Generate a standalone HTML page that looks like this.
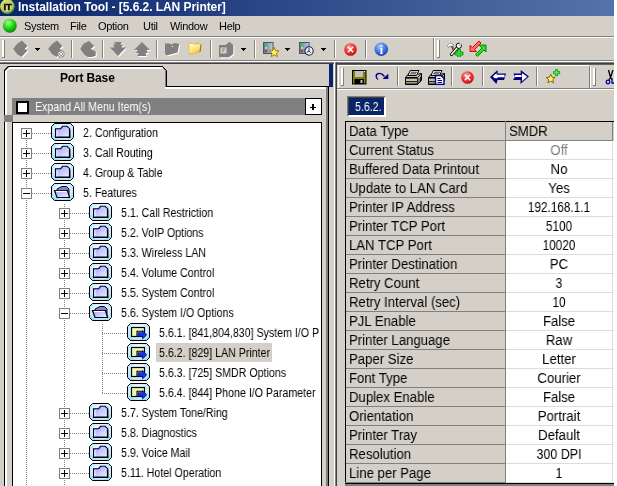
<!DOCTYPE html>
<html><head><meta charset="utf-8"><title>Installation Tool - [5.6.2. LAN Printer]</title>
<style>
html,body{margin:0;padding:0}
body{width:617px;height:486px;overflow:hidden;background:#D4D0C8;position:relative;font-family:"Liberation Sans",sans-serif;font-size:11px;color:#000}
body div,body svg{position:absolute}
.t,.c,.cv,.tr,.ms{will-change:transform}
.t{white-space:nowrap;line-height:13px;height:13px}
.tr,.ms{white-space:nowrap;line-height:14px;height:14px;font-size:12.5px;transform:scaleX(.85);transform-origin:0 0}
.c{white-space:nowrap;font-size:14px;transform:scaleX(.94);transform-origin:0 0;line-height:15px;height:15px}
.cv{white-space:nowrap;font-size:14px;transform:scaleX(.94);transform-origin:50% 0;line-height:15px;height:15px;text-align:center;width:106px}
.dv{background-image:repeating-linear-gradient(to bottom,#808080 0,#808080 1px,transparent 1px,transparent 2px)}
.dh{background-image:repeating-linear-gradient(to right,#808080 0,#808080 1px,transparent 1px,transparent 2px)}
</style></head><body>

<div style="left:0px;top:0px;width:614px;height:16px;background:linear-gradient(to right,#0A246A 0,#A6CAF0 1280px)"></div>
<svg style="left:0;top:0;will-change:transform" width="18" height="16" viewBox="0 0 18 16">
<defs><linearGradient id="gi" x1="0.1" y1="0" x2="0.9" y2="1"><stop offset="0" stop-color="#e8f060"/><stop offset="0.45" stop-color="#b8d040"/><stop offset="1" stop-color="#189028"/></linearGradient></defs>
<circle cx="7.400" cy="6.600" r="7.300" fill="url(#gi)"/>
<circle cx="7.400" cy="6.600" r="5.300" fill="#d4cc84"/>
<text x="3.400" y="9.800" font-family="Liberation Sans,sans-serif" font-weight="bold" font-size="9" textLength="8.200" lengthAdjust="spacingAndGlyphs" fill="#000" stroke="#000" stroke-width="0.400">IT</text>
</svg>
<div class="t" style="left:18px;top:0px;color:#fff;font-weight:bold;font-size:12px;line-height:14px;height:14px;letter-spacing:-0.05px">Installation Tool - [5.6.2. LAN Printer]</div>
<svg style="left:2px;top:18px" width="16" height="16" viewBox="0 0 16 16">
<defs><radialGradient id="gb" cx="0.4" cy="0.3" r="0.75"><stop offset="0" stop-color="#b0ff90"/><stop offset="0.45" stop-color="#28e018"/><stop offset="1" stop-color="#087808"/></radialGradient></defs>
<circle cx="7.800" cy="7.700" r="7" fill="url(#gb)"/></svg>
<div class="t" style="left:24px;top:19.7px;letter-spacing:-0.3px">System</div>
<div class="t" style="left:70px;top:19.7px;letter-spacing:-0.3px">File</div>
<div class="t" style="left:98px;top:19.7px;letter-spacing:-0.3px">Option</div>
<div class="t" style="left:143px;top:19.7px;letter-spacing:-0.3px">Util</div>
<div class="t" style="left:170px;top:19.7px;letter-spacing:-0.3px">Window</div>
<div class="t" style="left:219px;top:19.7px;letter-spacing:-0.3px">Help</div>
<div style="left:0px;top:36px;width:614px;height:1px;background:#808080"></div>
<div style="left:0px;top:37px;width:614px;height:1px;background:#ffffff"></div>
<div style="left:2px;top:40px;width:1px;height:18px;background:#fff"></div>
<div style="left:3px;top:40px;width:1px;height:18px;background:#fff"></div>
<div style="left:4px;top:40px;width:1px;height:18px;background:#808080"></div>
<div style="left:2px;top:40px;width:2px;height:1px;background:#fff"></div>
<div style="left:2px;top:57px;width:3px;height:1px;background:#808080"></div>
<svg style="left:13px;top:40px" width="17" height="19" viewBox="0 0 17 19"><path d="M9 0.5L14.5 6L11.5 9L14.5 10.5L8.5 17L4.5 14.5L0.2 9L4 4Z" fill="#fff" transform="translate(1,1)"/><path d="M9 0.5L14.5 6L11.5 9L14.5 10.5L8.5 17L4.5 14.5L0.2 9L4 4Z" fill="#808080"/></svg>
<svg style="left:35px;top:48px" width="5" height="3" viewBox="0 0 5 3"><path d="M0 0h5v1h-1v1h-1v1h-1v-1h-1v-1h-1z" fill="#000"/></svg>
<svg style="left:48px;top:40px" width="17" height="19" viewBox="0 0 17 19"><path d="M9 0.5L14.5 6L11.5 9L14.5 10.5L8.5 17L4.5 14.5L0.2 9L4 4Z" fill="#fff" transform="translate(1,1)"/><path d="M9 0.5L14.5 6L11.5 9L14.5 10.5L8.5 17L4.5 14.5L0.2 9L4 4Z" fill="#808080"/></svg>
<svg style="left:57px;top:50px" width="8" height="8" viewBox="0 0 8 8"><circle cx="4" cy="4" r="3.5" fill="#808080"/><circle cx="4" cy="4" r="2.4" fill="none" stroke="#fff" stroke-width="0.8"/><path d="M2.5 2.5l3 3M5.5 2.5l-3 3" stroke="#fff" stroke-width="0.8"/></svg>
<div style="left:71px;top:40px;width:1px;height:18px;background:#808080"></div>
<div style="left:72px;top:40px;width:1px;height:18px;background:#fff"></div>
<svg style="left:80px;top:40px" width="18" height="19" viewBox="0 0 18 19"><path d="M9 1L14.3 6L10.7 9L15.7 11.6V15.7L12 17H7.6L4.4 14.7L0.3 9L3.4 3.8Z" fill="#fff" transform="translate(1,1)"/><path d="M9 1L14.3 6L10.7 9L15.7 11.6V15.7L12 17H7.6L4.4 14.7L0.3 9L3.4 3.8Z" fill="#808080"/></svg>
<div style="left:102px;top:40px;width:1px;height:18px;background:#808080"></div>
<div style="left:103px;top:40px;width:1px;height:18px;background:#fff"></div>
<svg style="left:110px;top:42px" width="18" height="16" viewBox="0 0 18 16"><path d="M4 0h8l-1.5 2.5h2.5l-1.5 3h4.5L8 14L0 5.5h4.5L3 2.500h2.500z" fill="#fff" transform="translate(1,1)"/><path d="M4 0h8l-1.5 2.5h2.5l-1.5 3h4.5L8 14L0 5.5h4.5L3 2.500h2.500z" fill="#808080"/></svg>
<svg style="left:134px;top:42px" width="18" height="16" viewBox="0 0 18 16"><path d="M8 0L16 8H12.5L14 11H11.5L12.5 14H3.5L4.5 11H2L3.5 8H0Z" fill="#fff" transform="translate(1,1)"/><path d="M8 0L16 8H12.5L14 11H11.5L12.5 14H3.5L4.5 11H2L3.5 8H0Z" fill="#808080"/></svg>
<div style="left:156px;top:40px;width:1px;height:18px;background:#808080"></div>
<div style="left:157px;top:40px;width:1px;height:18px;background:#fff"></div>
<svg style="left:165px;top:43px" width="16" height="14" viewBox="0 0 16 14"><path d="M0 0.5H5L6 1.5L10 0L14.3 1L12.5 9.5L1.500 12.5L0 10.500Z" fill="#fff" transform="translate(1,1)"/><path d="M0 0.5H5L6 1.5L10 0L14.3 1L12.5 9.5L1.500 12.5L0 10.500Z" fill="#808080"/></svg>
<div style="left:172px;top:46px;width:1px;height:1px;background:#fff"></div>
<svg style="left:188px;top:42px" width="15" height="14" viewBox="0 0 15 14">
<defs><linearGradient id="gf" x1="0" y1="0" x2="0.6" y2="1"><stop offset="0" stop-color="#fffcd8"/><stop offset="0.5" stop-color="#ffec88"/><stop offset="1" stop-color="#f0c040"/></linearGradient></defs>
<path d="M1 1.500H5L6 2.500L9.500 1L13 2.500L12 10L2 12.500L1 11Z" fill="url(#gf)" stroke="#d8a830" stroke-width="0.6"/>
<path d="M13 2.500L12 10" stroke="#806830" stroke-width="0.9"/><path d="M8.500 1.500l2 0.500" stroke="#e07070" stroke-width="0.8"/></svg>
<div style="left:210px;top:40px;width:1px;height:18px;background:#808080"></div>
<div style="left:211px;top:40px;width:1px;height:18px;background:#fff"></div>
<svg style="left:219px;top:41px" width="17" height="19" viewBox="0 0 17 19"><path d="M0 4H6.500L10.500 0.700L14.300 4V13L10 16.300H0Z" fill="#fff" transform="translate(1,1)"/><path d="M0 4H6.500L10.500 0.700L14.300 4V13L10 16.300H0Z" fill="#808080"/></svg>
<svg style="left:220px;top:47px" width="8" height="7" viewBox="0 0 8 7"><rect x="0.5" y="0.5" width="6" height="6" fill="#d4d0c8"/><path d="M2 2h3M2 4h2" stroke="#808080" stroke-width="1"/></svg>
<svg style="left:241px;top:48px" width="5" height="3" viewBox="0 0 5 3"><path d="M0 0h5v1h-1v1h-1v1h-1v-1h-1v-1h-1z" fill="#000"/></svg>
<div style="left:254px;top:40px;width:1px;height:18px;background:#808080"></div>
<div style="left:255px;top:40px;width:1px;height:18px;background:#fff"></div>
<svg style="left:263px;top:42px" width="11" height="12" viewBox="0 0 11 12">
<defs><linearGradient id="gp263" x1="0" y1="0" x2="1" y2="0"><stop offset="0" stop-color="#5878a0"/><stop offset="1" stop-color="#c0d0e0"/></linearGradient></defs>
<rect x="0.5" y="0.5" width="9.5" height="11" fill="url(#gp263)" stroke="#405878" stroke-width="1"/>
<rect x="2" y="2" width="2" height="2" fill="#20e020"/><rect x="2" y="5" width="2" height="2" fill="#f0e020"/><rect x="2" y="8" width="2" height="2" fill="#e02020"/></svg>
<svg style="left:268.800px;top:47.300px" width="10.500" height="10.500" viewBox="0 0 12 12"><path d="M6 0.5l1.6 3.6 3.9 0.4 -2.9 2.6 0.9 3.9 -3.5-2.1 -3.5 2.1 0.9-3.9 -2.9-2.6 3.9-0.4z" fill="#fff060" stroke="#907000" stroke-width="1"/></svg>
<svg style="left:285px;top:48px" width="5" height="3" viewBox="0 0 5 3"><path d="M0 0h5v1h-1v1h-1v1h-1v-1h-1v-1h-1z" fill="#000"/></svg>
<svg style="left:299px;top:42px" width="11" height="12" viewBox="0 0 11 12">
<defs><linearGradient id="gp299" x1="0" y1="0" x2="1" y2="0"><stop offset="0" stop-color="#5878a0"/><stop offset="1" stop-color="#c0d0e0"/></linearGradient></defs>
<rect x="0.5" y="0.5" width="9.5" height="11" fill="url(#gp299)" stroke="#405878" stroke-width="1"/>
<rect x="2" y="2" width="2" height="2" fill="#20e020"/><rect x="2" y="5" width="2" height="2" fill="#f0e020"/><rect x="2" y="8" width="2" height="2" fill="#e02020"/></svg>
<svg style="left:304.200px;top:46px" width="10" height="10" viewBox="0 0 11 11"><circle cx="5.5" cy="5.5" r="4.6" fill="#f0f0ff" stroke="#202040" stroke-width="1.2"/><path d="M5.5 2v3.5l2 2M5.5 5.5l-2.5 1.5" stroke="#202040" stroke-width="1" fill="none"/></svg>
<svg style="left:321px;top:48px" width="5" height="3" viewBox="0 0 5 3"><path d="M0 0h5v1h-1v1h-1v1h-1v-1h-1v-1h-1z" fill="#000"/></svg>
<div style="left:334px;top:40px;width:1px;height:18px;background:#808080"></div>
<div style="left:335px;top:40px;width:1px;height:18px;background:#fff"></div>
<svg style="left:344px;top:42.7px" width="13" height="13" viewBox="0 0 13 13">
<defs><radialGradient id="gr344" cx="0.4" cy="0.32" r="0.72"><stop offset="0" stop-color="#ffb0a8"/><stop offset="0.45" stop-color="#f04040"/><stop offset="0.85" stop-color="#d01818"/><stop offset="1" stop-color="#901010"/></radialGradient></defs>
<circle cx="6.500" cy="6.500" r="6.300" fill="url(#gr344)"/><path d="M3.800 3.800l5.400 5.400M9.200 3.800l-5.400 5.400" stroke="#fff" stroke-width="1.400"/></svg>
<div style="left:365px;top:40px;width:1px;height:18px;background:#808080"></div>
<div style="left:366px;top:40px;width:1px;height:18px;background:#fff"></div>
<svg style="left:374px;top:41.500px;will-change:transform" width="14.500" height="14.500" viewBox="0 0 15 15">
<defs><radialGradient id="gn" cx="0.4" cy="0.3" r="0.75"><stop offset="0" stop-color="#a8c8ff"/><stop offset="0.6" stop-color="#3870e0"/><stop offset="1" stop-color="#1840a0"/></radialGradient></defs>
<circle cx="7.5" cy="7.5" r="7" fill="url(#gn)"/>
<text x="7.5" y="12" font-family="Liberation Serif,serif" font-weight="bold" font-size="12" text-anchor="middle" fill="#fff">i</text></svg>
<div style="left:433px;top:38px;width:1px;height:22px;background:#808080"></div>
<div style="left:434px;top:38px;width:1px;height:22px;background:#fff"></div>
<div style="left:437px;top:40px;width:1px;height:18px;background:#fff"></div>
<div style="left:438px;top:40px;width:1px;height:18px;background:#fff"></div>
<div style="left:439px;top:40px;width:1px;height:18px;background:#808080"></div>
<div style="left:437px;top:40px;width:2px;height:1px;background:#fff"></div>
<div style="left:437px;top:57px;width:3px;height:1px;background:#808080"></div>
<svg style="left:447px;top:42px" width="17" height="15" viewBox="0 0 17 15">
<path d="M4.500 3.500L9 12" stroke="#000" stroke-width="1.800"/><path d="M5.500 5L7.500 8.500" stroke="#f08020" stroke-width="1.200"/>
<path d="M0.500 3.500L3 1L6.500 2.500L5.500 4.500L3 4L1.500 5.500Z" fill="#fff" stroke="#606060" stroke-width="0.600"/>
<path d="M10.500 5.500L4.500 12.500" stroke="#000" stroke-width="3.200" stroke-linecap="round"/><path d="M10.500 5.500L4.500 12.500" stroke="#fff" stroke-width="1.500" stroke-linecap="round"/>
<circle cx="11.800" cy="3.800" r="2.600" fill="#fff" stroke="#000" stroke-width="1"/><path d="M11.800 3.800L14.500 0.500" stroke="#d4d0c8" stroke-width="1.800"/>
<path d="M10.500 7.500h3v2.500h2.500v3h-2.500v2.500h-3v-2.500h-2.500v-3h2.500z" fill="#28e028" stroke="#108010" stroke-width="0.800"/></svg>
<svg style="left:469px;top:41px" width="18" height="17" viewBox="0 0 18 17">
<path d="M1 4.500V10.500H7.500L5.500 8.500L12 2L10 0L3.500 6.500Z" fill="#ff7070" stroke="#e00000" stroke-width="1"/>
<path d="M10 4H17V11L15 9L8.500 15.500L6.500 13.500L13 7Z" fill="#30d830" stroke="#009000" stroke-width="1"/></svg>
<div style="left:0px;top:60px;width:614px;height:1px;background:#808080"></div>
<div style="left:0px;top:61px;width:614px;height:1px;background:#fff"></div>
<div style="left:0px;top:62px;width:614px;height:1px;background:#808080"></div>
<div style="left:0px;top:63px;width:614px;height:1px;background:#404040"></div>
<div style="left:4px;top:70px;width:1px;height:416px;background:#000"></div>
<div style="left:5px;top:71px;width:1px;height:415px;background:#fff"></div>
<div style="left:6px;top:70px;width:1px;height:416px;background:#fff"></div>
<div style="left:8px;top:66px;width:155px;height:1px;background:#000"></div>
<div style="left:9px;top:67px;width:154px;height:1px;background:#fff"></div>
<div style="left:8px;top:68px;width:155px;height:1px;background:#fff"></div>
<svg style="left:4px;top:66px" width="6" height="6" viewBox="0 0 6 6"><path d="M2 5.500V4.600L5 1.900" fill="none" stroke="#fff" stroke-width="2"/><path d="M0.500 4.500L4.500 0.500" fill="none" stroke="#000" stroke-width="1.200"/></svg>
<svg style="left:161px;top:66px" width="7" height="22" viewBox="0 0 7 22"><path d="M1.500 0.500L5.500 4.500V20.500" fill="none" stroke="#000" stroke-width="1"/><path d="M1.500 1.500L4.500 4.500V21" fill="none" stroke="#808080" stroke-width="1"/></svg>
<div style="left:166px;top:86px;width:163px;height:1px;background:#000"></div>
<div style="left:165px;top:87px;width:162px;height:1px;background:#fff"></div>
<div style="left:165px;top:88px;width:162px;height:1px;background:#fff"></div>
<div style="left:326px;top:87px;width:1px;height:399px;background:#808080"></div>
<div style="left:327px;top:87px;width:1px;height:399px;background:#808080"></div>
<div style="left:328px;top:86px;width:1px;height:400px;background:#000"></div>
<div class="t" style="left:60px;top:70.5px;letter-spacing:-0.15px;font-weight:bold;font-size:12px;line-height:14px;height:14px">Port Base</div>
<div style="left:12px;top:98px;width:293px;height:17px;background:#808080"></div>
<div style="left:4px;top:115px;width:9px;height:7px;background:#808080"></div>
<div style="left:16px;top:101px;width:13px;height:13px;background:#fff;border:2px solid #000;box-sizing:border-box"></div>
<div class="ms" style="left:35px;top:99.5px;color:#fff">Expand All Menu Item(s)</div>
<div style="left:305px;top:98px;width:17px;height:17px;background:#fff;border:1px solid #000;box-sizing:border-box"></div>
<div style="left:310px;top:106.5px;width:6px;height:1.6px;background:#000"></div>
<div style="left:312.2px;top:104.3px;width:1.6px;height:6px;background:#000"></div>
<div style="left:12px;top:122px;width:310px;height:370px;background:#fff;border:1px solid #000;box-sizing:border-box"></div>
<svg width="0" height="0" style="left:0;top:0"><defs>
<radialGradient id="gc" cx="0.5" cy="0.42" r="0.62"><stop offset="0" stop-color="#f4fcff"/><stop offset="0.55" stop-color="#e4f6fd"/><stop offset="0.85" stop-color="#b4e6fa"/><stop offset="1" stop-color="#98d8f8"/></radialGradient>
<linearGradient id="gl" x1="0" y1="0" x2="1" y2="1"><stop offset="0" stop-color="#a0a0f4"/><stop offset="0.5" stop-color="#c8c8ff"/><stop offset="1" stop-color="#f0f0ff"/></linearGradient>
</defs></svg>
<div class="dv" style="left:26px;top:134px;width:1px;height:352px;"></div>
<div class="dv" style="left:64px;top:204px;width:1px;height:282px;"></div>
<div class="dv" style="left:102px;top:324px;width:1px;height:70px;"></div>
<div style="left:13px;top:123px;width:308px;height:363px;overflow:hidden">
<div class="tr" style="left:69.5px;top:2.5px">2. Configuration</div>
<div class="tr" style="left:69.5px;top:22.5px">3. Call Routing</div>
<div class="tr" style="left:69.5px;top:42.5px">4. Group &amp; Table</div>
<div class="tr" style="left:69.5px;top:62.5px">5. Features</div>
<div class="tr" style="left:107.5px;top:82.5px">5.1. Call Restriction</div>
<div class="tr" style="left:107.5px;top:102.5px">5.2. VoIP Options</div>
<div class="tr" style="left:107.5px;top:122.5px">5.3. Wireless LAN</div>
<div class="tr" style="left:107.5px;top:142.5px">5.4. Volume Control</div>
<div class="tr" style="left:107.5px;top:162.5px">5.5. System Control</div>
<div class="tr" style="left:107.5px;top:182.5px">5.6. System I/O Options</div>
<div class="tr" style="left:145.5px;top:202.5px">5.6.1. [841,804,830] System I/O P</div>
<div style="left:142.5px;top:220px;width:116px;height:19px;background:#D4D0C8"></div>
<div class="tr" style="left:145.5px;top:222.5px">5.6.2. [829] LAN Printer</div>
<div class="tr" style="left:145.5px;top:242.5px">5.6.3. [725] SMDR Options</div>
<div class="tr" style="left:145.5px;top:262.5px">5.6.4. [844] Phone I/O Parameter</div>
<div class="tr" style="left:107.5px;top:282.5px">5.7. System Tone/Ring</div>
<div class="tr" style="left:107.5px;top:302.5px">5.8. Diagnostics</div>
<div class="tr" style="left:107.5px;top:322.5px">5.9. Voice Mail</div>
<div class="tr" style="left:107.5px;top:342.5px">5.11. Hotel Operation</div>
</div>
<div class="dh" style="left:32px;top:133px;width:19px;height:1px;"></div>
<div style="left:21px;top:128px;width:11px;height:11px;background:#fff;border:1px solid #808080;box-sizing:border-box"></div>
<div style="left:23px;top:133px;width:7px;height:1px;background:#000"></div>
<div style="left:26px;top:130px;width:1px;height:7px;background:#000"></div>
<svg style="left:51px;top:123px" width="23" height="18" viewBox="0 0 23 18"><path d="M3.500 0.500H19.500L22.500 3.500V14.500L19.500 17.500H3.500L0.500 14.500V3.500Z" fill="url(#gc)" stroke="#000" stroke-width="1"/><path d="M4.500 5.700V14.500H18.700V5.700L16 3.300H11.500L9.700 5.700Z" fill="url(#gl)" stroke="#000030" stroke-width="1.1"/><path d="M4.500 14.300H18.600V6.500" fill="none" stroke="#000" stroke-width="1.400"/><path d="M6 7v6.500" stroke="#fff" stroke-width="1" opacity="0.8"/></svg>
<div class="dh" style="left:32px;top:153px;width:19px;height:1px;"></div>
<div style="left:21px;top:148px;width:11px;height:11px;background:#fff;border:1px solid #808080;box-sizing:border-box"></div>
<div style="left:23px;top:153px;width:7px;height:1px;background:#000"></div>
<div style="left:26px;top:150px;width:1px;height:7px;background:#000"></div>
<svg style="left:51px;top:143px" width="23" height="18" viewBox="0 0 23 18"><path d="M3.500 0.500H19.500L22.500 3.500V14.500L19.500 17.500H3.500L0.500 14.500V3.500Z" fill="url(#gc)" stroke="#000" stroke-width="1"/><path d="M4.500 5.700V14.500H18.700V5.700L16 3.300H11.500L9.700 5.700Z" fill="url(#gl)" stroke="#000030" stroke-width="1.1"/><path d="M4.500 14.300H18.600V6.500" fill="none" stroke="#000" stroke-width="1.400"/><path d="M6 7v6.500" stroke="#fff" stroke-width="1" opacity="0.8"/></svg>
<div class="dh" style="left:32px;top:173px;width:19px;height:1px;"></div>
<div style="left:21px;top:168px;width:11px;height:11px;background:#fff;border:1px solid #808080;box-sizing:border-box"></div>
<div style="left:23px;top:173px;width:7px;height:1px;background:#000"></div>
<div style="left:26px;top:170px;width:1px;height:7px;background:#000"></div>
<svg style="left:51px;top:163px" width="23" height="18" viewBox="0 0 23 18"><path d="M3.500 0.500H19.500L22.500 3.500V14.500L19.500 17.500H3.500L0.500 14.500V3.500Z" fill="url(#gc)" stroke="#000" stroke-width="1"/><path d="M4.500 5.700V14.500H18.700V5.700L16 3.300H11.500L9.700 5.700Z" fill="url(#gl)" stroke="#000030" stroke-width="1.1"/><path d="M4.500 14.300H18.600V6.500" fill="none" stroke="#000" stroke-width="1.400"/><path d="M6 7v6.500" stroke="#fff" stroke-width="1" opacity="0.8"/></svg>
<div class="dh" style="left:32px;top:193px;width:19px;height:1px;"></div>
<div style="left:21px;top:188px;width:11px;height:11px;background:#fff;border:1px solid #808080;box-sizing:border-box"></div>
<div style="left:23px;top:193px;width:7px;height:1px;background:#000"></div>
<svg style="left:51px;top:183px" width="23" height="18" viewBox="0 0 23 18"><path d="M3.500 0.500H19.500L22.500 3.500V14.500L19.500 17.500H3.500L0.500 14.500V3.500Z" fill="url(#gc)" stroke="#000" stroke-width="1"/><path d="M6 6L11 3.500H15.500L18 6V13.500H7Z" fill="#8080d8" stroke="#000030" stroke-width="1"/><path d="M3.500 7.500H16.500L18.500 14.500H6Z" fill="url(#gl)" stroke="#000" stroke-width="1.2"/><path d="M5 8.500H15.500" stroke="#fff" stroke-width="1.2"/></svg>
<div class="dh" style="left:70px;top:213px;width:19px;height:1px;"></div>
<div style="left:59px;top:208px;width:11px;height:11px;background:#fff;border:1px solid #808080;box-sizing:border-box"></div>
<div style="left:61px;top:213px;width:7px;height:1px;background:#000"></div>
<div style="left:64px;top:210px;width:1px;height:7px;background:#000"></div>
<svg style="left:89px;top:203px" width="23" height="18" viewBox="0 0 23 18"><path d="M3.500 0.500H19.500L22.500 3.500V14.500L19.500 17.500H3.500L0.500 14.500V3.500Z" fill="url(#gc)" stroke="#000" stroke-width="1"/><path d="M4.500 5.700V14.500H18.700V5.700L16 3.300H11.500L9.700 5.700Z" fill="url(#gl)" stroke="#000030" stroke-width="1.1"/><path d="M4.500 14.300H18.600V6.500" fill="none" stroke="#000" stroke-width="1.400"/><path d="M6 7v6.500" stroke="#fff" stroke-width="1" opacity="0.8"/></svg>
<div class="dh" style="left:70px;top:233px;width:19px;height:1px;"></div>
<div style="left:59px;top:228px;width:11px;height:11px;background:#fff;border:1px solid #808080;box-sizing:border-box"></div>
<div style="left:61px;top:233px;width:7px;height:1px;background:#000"></div>
<div style="left:64px;top:230px;width:1px;height:7px;background:#000"></div>
<svg style="left:89px;top:223px" width="23" height="18" viewBox="0 0 23 18"><path d="M3.500 0.500H19.500L22.500 3.500V14.500L19.500 17.500H3.500L0.500 14.500V3.500Z" fill="url(#gc)" stroke="#000" stroke-width="1"/><path d="M4.500 5.700V14.500H18.700V5.700L16 3.300H11.500L9.700 5.700Z" fill="url(#gl)" stroke="#000030" stroke-width="1.1"/><path d="M4.500 14.300H18.600V6.500" fill="none" stroke="#000" stroke-width="1.400"/><path d="M6 7v6.500" stroke="#fff" stroke-width="1" opacity="0.8"/></svg>
<div class="dh" style="left:70px;top:253px;width:19px;height:1px;"></div>
<div style="left:59px;top:248px;width:11px;height:11px;background:#fff;border:1px solid #808080;box-sizing:border-box"></div>
<div style="left:61px;top:253px;width:7px;height:1px;background:#000"></div>
<div style="left:64px;top:250px;width:1px;height:7px;background:#000"></div>
<svg style="left:89px;top:243px" width="23" height="18" viewBox="0 0 23 18"><path d="M3.500 0.500H19.500L22.500 3.500V14.500L19.500 17.500H3.500L0.500 14.500V3.500Z" fill="url(#gc)" stroke="#000" stroke-width="1"/><path d="M4.500 5.700V14.500H18.700V5.700L16 3.300H11.500L9.700 5.700Z" fill="url(#gl)" stroke="#000030" stroke-width="1.1"/><path d="M4.500 14.300H18.600V6.500" fill="none" stroke="#000" stroke-width="1.400"/><path d="M6 7v6.500" stroke="#fff" stroke-width="1" opacity="0.8"/></svg>
<div class="dh" style="left:70px;top:273px;width:19px;height:1px;"></div>
<div style="left:59px;top:268px;width:11px;height:11px;background:#fff;border:1px solid #808080;box-sizing:border-box"></div>
<div style="left:61px;top:273px;width:7px;height:1px;background:#000"></div>
<div style="left:64px;top:270px;width:1px;height:7px;background:#000"></div>
<svg style="left:89px;top:263px" width="23" height="18" viewBox="0 0 23 18"><path d="M3.500 0.500H19.500L22.500 3.500V14.500L19.500 17.500H3.500L0.500 14.500V3.500Z" fill="url(#gc)" stroke="#000" stroke-width="1"/><path d="M4.500 5.700V14.500H18.700V5.700L16 3.300H11.500L9.700 5.700Z" fill="url(#gl)" stroke="#000030" stroke-width="1.1"/><path d="M4.500 14.300H18.600V6.500" fill="none" stroke="#000" stroke-width="1.400"/><path d="M6 7v6.500" stroke="#fff" stroke-width="1" opacity="0.8"/></svg>
<div class="dh" style="left:70px;top:293px;width:19px;height:1px;"></div>
<div style="left:59px;top:288px;width:11px;height:11px;background:#fff;border:1px solid #808080;box-sizing:border-box"></div>
<div style="left:61px;top:293px;width:7px;height:1px;background:#000"></div>
<div style="left:64px;top:290px;width:1px;height:7px;background:#000"></div>
<svg style="left:89px;top:283px" width="23" height="18" viewBox="0 0 23 18"><path d="M3.500 0.500H19.500L22.500 3.500V14.500L19.500 17.500H3.500L0.500 14.500V3.500Z" fill="url(#gc)" stroke="#000" stroke-width="1"/><path d="M4.500 5.700V14.500H18.700V5.700L16 3.300H11.500L9.700 5.700Z" fill="url(#gl)" stroke="#000030" stroke-width="1.1"/><path d="M4.500 14.300H18.600V6.500" fill="none" stroke="#000" stroke-width="1.400"/><path d="M6 7v6.500" stroke="#fff" stroke-width="1" opacity="0.8"/></svg>
<div class="dh" style="left:70px;top:313px;width:19px;height:1px;"></div>
<div style="left:59px;top:308px;width:11px;height:11px;background:#fff;border:1px solid #808080;box-sizing:border-box"></div>
<div style="left:61px;top:313px;width:7px;height:1px;background:#000"></div>
<svg style="left:89px;top:303px" width="23" height="18" viewBox="0 0 23 18"><path d="M3.500 0.500H19.500L22.500 3.500V14.500L19.500 17.500H3.500L0.500 14.500V3.500Z" fill="url(#gc)" stroke="#000" stroke-width="1"/><path d="M6 6L11 3.500H15.500L18 6V13.500H7Z" fill="#8080d8" stroke="#000030" stroke-width="1"/><path d="M3.500 7.500H16.500L18.500 14.500H6Z" fill="url(#gl)" stroke="#000" stroke-width="1.2"/><path d="M5 8.500H15.500" stroke="#fff" stroke-width="1.2"/></svg>
<div class="dh" style="left:102px;top:333px;width:25px;height:1px;"></div>
<svg style="left:127px;top:323px" width="23" height="18" viewBox="0 0 23 18"><path d="M3.500 0.500H19.500L22.500 3.500V14.500L19.500 17.500H3.500L0.500 14.500V3.500Z" fill="url(#gc)" stroke="#000" stroke-width="1"/><rect x="4.500" y="4.500" width="13" height="9" fill="#f0f8b8" stroke="#000" stroke-width="1.2"/><path d="M10 13.500V8.300H15.700" fill="none" stroke="#000" stroke-width="1.100"/><path d="M11 9.700H15.500V7.500L19.800 11.700L15.500 15.900V13.300H11Z" fill="#1038e8" stroke="#000070" stroke-width="0.7"/></svg>
<div class="dh" style="left:102px;top:353px;width:25px;height:1px;"></div>
<svg style="left:127px;top:343px" width="23" height="18" viewBox="0 0 23 18"><path d="M3.500 0.500H19.500L22.500 3.500V14.500L19.500 17.500H3.500L0.500 14.500V3.500Z" fill="url(#gc)" stroke="#000" stroke-width="1"/><rect x="4.500" y="4.500" width="13" height="9" fill="#f0f8b8" stroke="#000" stroke-width="1.2"/><path d="M10 13.500V8.300H15.700" fill="none" stroke="#000" stroke-width="1.100"/><path d="M11 9.700H15.500V7.500L19.800 11.700L15.500 15.900V13.300H11Z" fill="#1038e8" stroke="#000070" stroke-width="0.7"/></svg>
<div class="dh" style="left:102px;top:373px;width:25px;height:1px;"></div>
<svg style="left:127px;top:363px" width="23" height="18" viewBox="0 0 23 18"><path d="M3.500 0.500H19.500L22.500 3.500V14.500L19.500 17.500H3.500L0.500 14.500V3.500Z" fill="url(#gc)" stroke="#000" stroke-width="1"/><rect x="4.500" y="4.500" width="13" height="9" fill="#f0f8b8" stroke="#000" stroke-width="1.2"/><path d="M10 13.500V8.300H15.700" fill="none" stroke="#000" stroke-width="1.100"/><path d="M11 9.700H15.500V7.500L19.800 11.700L15.500 15.900V13.300H11Z" fill="#1038e8" stroke="#000070" stroke-width="0.7"/></svg>
<div class="dh" style="left:102px;top:393px;width:25px;height:1px;"></div>
<svg style="left:127px;top:383px" width="23" height="18" viewBox="0 0 23 18"><path d="M3.500 0.500H19.500L22.500 3.500V14.500L19.500 17.500H3.500L0.500 14.500V3.500Z" fill="url(#gc)" stroke="#000" stroke-width="1"/><rect x="4.500" y="4.500" width="13" height="9" fill="#f0f8b8" stroke="#000" stroke-width="1.2"/><path d="M10 13.500V8.300H15.700" fill="none" stroke="#000" stroke-width="1.100"/><path d="M11 9.700H15.500V7.500L19.800 11.700L15.500 15.900V13.300H11Z" fill="#1038e8" stroke="#000070" stroke-width="0.7"/></svg>
<div class="dh" style="left:70px;top:413px;width:19px;height:1px;"></div>
<div style="left:59px;top:408px;width:11px;height:11px;background:#fff;border:1px solid #808080;box-sizing:border-box"></div>
<div style="left:61px;top:413px;width:7px;height:1px;background:#000"></div>
<div style="left:64px;top:410px;width:1px;height:7px;background:#000"></div>
<svg style="left:89px;top:403px" width="23" height="18" viewBox="0 0 23 18"><path d="M3.500 0.500H19.500L22.500 3.500V14.500L19.500 17.500H3.500L0.500 14.500V3.500Z" fill="url(#gc)" stroke="#000" stroke-width="1"/><path d="M4.500 5.700V14.500H18.700V5.700L16 3.300H11.500L9.700 5.700Z" fill="url(#gl)" stroke="#000030" stroke-width="1.1"/><path d="M4.500 14.300H18.600V6.500" fill="none" stroke="#000" stroke-width="1.400"/><path d="M6 7v6.500" stroke="#fff" stroke-width="1" opacity="0.8"/></svg>
<div class="dh" style="left:70px;top:433px;width:19px;height:1px;"></div>
<div style="left:59px;top:428px;width:11px;height:11px;background:#fff;border:1px solid #808080;box-sizing:border-box"></div>
<div style="left:61px;top:433px;width:7px;height:1px;background:#000"></div>
<div style="left:64px;top:430px;width:1px;height:7px;background:#000"></div>
<svg style="left:89px;top:423px" width="23" height="18" viewBox="0 0 23 18"><path d="M3.500 0.500H19.500L22.500 3.500V14.500L19.500 17.500H3.500L0.500 14.500V3.500Z" fill="url(#gc)" stroke="#000" stroke-width="1"/><path d="M4.500 5.700V14.500H18.700V5.700L16 3.300H11.500L9.700 5.700Z" fill="url(#gl)" stroke="#000030" stroke-width="1.1"/><path d="M4.500 14.300H18.600V6.500" fill="none" stroke="#000" stroke-width="1.400"/><path d="M6 7v6.500" stroke="#fff" stroke-width="1" opacity="0.8"/></svg>
<div class="dh" style="left:70px;top:453px;width:19px;height:1px;"></div>
<div style="left:59px;top:448px;width:11px;height:11px;background:#fff;border:1px solid #808080;box-sizing:border-box"></div>
<div style="left:61px;top:453px;width:7px;height:1px;background:#000"></div>
<div style="left:64px;top:450px;width:1px;height:7px;background:#000"></div>
<svg style="left:89px;top:443px" width="23" height="18" viewBox="0 0 23 18"><path d="M3.500 0.500H19.500L22.500 3.500V14.500L19.500 17.500H3.500L0.500 14.500V3.500Z" fill="url(#gc)" stroke="#000" stroke-width="1"/><path d="M4.500 5.700V14.500H18.700V5.700L16 3.300H11.500L9.700 5.700Z" fill="url(#gl)" stroke="#000030" stroke-width="1.1"/><path d="M4.500 14.300H18.600V6.500" fill="none" stroke="#000" stroke-width="1.400"/><path d="M6 7v6.500" stroke="#fff" stroke-width="1" opacity="0.8"/></svg>
<div class="dh" style="left:70px;top:473px;width:19px;height:1px;"></div>
<div style="left:59px;top:468px;width:11px;height:11px;background:#fff;border:1px solid #808080;box-sizing:border-box"></div>
<div style="left:61px;top:473px;width:7px;height:1px;background:#000"></div>
<div style="left:64px;top:470px;width:1px;height:7px;background:#000"></div>
<svg style="left:89px;top:463px" width="23" height="18" viewBox="0 0 23 18"><path d="M3.500 0.500H19.500L22.500 3.500V14.500L19.500 17.500H3.500L0.500 14.500V3.500Z" fill="url(#gc)" stroke="#000" stroke-width="1"/><path d="M4.500 5.700V14.500H18.700V5.700L16 3.300H11.500L9.700 5.700Z" fill="url(#gl)" stroke="#000030" stroke-width="1.1"/><path d="M4.500 14.300H18.600V6.500" fill="none" stroke="#000" stroke-width="1.400"/><path d="M6 7v6.500" stroke="#fff" stroke-width="1" opacity="0.8"/></svg>
<div style="left:329px;top:64px;width:4px;height:23px;background:#0A246A"></div>
<div style="left:334px;top:61px;width:1px;height:425px;background:#fff"></div>
<div style="left:335px;top:62px;width:1px;height:424px;background:#808080"></div>
<div style="left:336px;top:62px;width:1px;height:424px;background:#404040"></div>
<div style="left:337px;top:64px;width:277px;height:1px;background:#606060"></div>
<div style="left:338px;top:65px;width:251px;height:1px;background:#fff"></div>
<div style="left:338px;top:65px;width:1px;height:23px;background:#fff"></div>
<div style="left:337px;top:88px;width:277px;height:1px;background:#808080"></div>
<div style="left:337px;top:89px;width:277px;height:1px;background:#fff"></div>
<div style="left:341px;top:68px;width:1px;height:18px;background:#fff"></div>
<div style="left:342px;top:68px;width:1px;height:18px;background:#fff"></div>
<div style="left:343px;top:68px;width:1px;height:18px;background:#808080"></div>
<div style="left:341px;top:68px;width:2px;height:1px;background:#fff"></div>
<div style="left:341px;top:85px;width:3px;height:1px;background:#808080"></div>
<svg style="left:352px;top:70px" width="15" height="15" viewBox="0 0 15 15">
<rect x="0.500" y="0.500" width="13.500" height="13.500" fill="#808000" stroke="#000" stroke-width="1"/>
<rect x="3" y="1" width="8" height="6" fill="#c0c0c0"/>
<rect x="2.500" y="9" width="9.500" height="5" fill="#000"/><rect x="8.500" y="10" width="2" height="3" fill="#c0c0c0"/><rect x="12" y="1" width="1" height="1" fill="#fff"/></svg>
<svg style="left:375px;top:71px" width="14" height="10" viewBox="0 0 14 10">
<path d="M3 8.500C0.500 7 0.500 3 3.500 2.500C6 2 8 3.500 9.500 5.500" fill="none" stroke="#000090" stroke-width="1.400"/>
<path d="M13.300 2.700V8H7.500Z" fill="#000090"/></svg>
<div style="left:397px;top:67px;width:1px;height:19px;background:#808080"></div>
<div style="left:398px;top:67px;width:1px;height:19px;background:#fff"></div>
<svg style="left:405px;top:70px" width="17" height="15" viewBox="0 0 17 15">
<path d="M0.500 7.500L3.500 4H13.500L16.500 3.500V10.500L12.500 14.500H0.500Z" fill="#c0c0c0" stroke="#000" stroke-width="1"/>
<path d="M12.500 7.500V14.500M12.500 7.500L16.500 3.500M14 8v5M15.500 6.500v5" stroke="#000" stroke-width="0.800" fill="none"/>
<rect x="0.500" y="7" width="12" height="1.600" fill="#000"/><rect x="1" y="11.200" width="11.500" height="1" fill="#000"/><rect x="0.500" y="13.500" width="12" height="1.200" fill="#000"/>
<rect x="6.500" y="9.500" width="3.500" height="1.200" fill="#f0e000"/>
<path d="M5.200 0.500H14L11.500 5.500H3Z" fill="#fff" stroke="#000" stroke-width="1"/><path d="M6 2.200H12M5 3.800H11" stroke="#000" stroke-width="0.800"/></svg>
<svg style="left:428px;top:70px" width="17" height="15" viewBox="0 0 17 15">
<path d="M0.500 7.500L3.500 4H13.500L16.500 3.500V10.500L12.500 14.500H0.500Z" fill="#c0c0c0" stroke="#000" stroke-width="1"/>
<path d="M12.500 7.500V14.500M12.500 7.500L16.500 3.500M14 8v5M15.500 6.500v5" stroke="#000" stroke-width="0.800" fill="none"/>
<rect x="0.500" y="7" width="12" height="1.600" fill="#000"/><rect x="1" y="11.200" width="11.500" height="1" fill="#000"/><rect x="0.500" y="13.500" width="12" height="1.200" fill="#000"/>
<rect x="6.500" y="9.500" width="3.500" height="1.200" fill="#f0e000"/>
<path d="M5.200 0.500H14L11.500 5.500H3Z" fill="#fff" stroke="#000" stroke-width="1"/><path d="M6 2.200H12M5 3.800H11" stroke="#000" stroke-width="0.800"/><path d="M7.500 5.500H13L16 8.500V14.500H7.500Z" fill="#fff" stroke="#000080" stroke-width="1.400"/><path d="M9.500 8.500h3M9.500 10.500h4.500M9.500 12.500h4.500" stroke="#000080" stroke-width="1"/></svg>
<div style="left:451px;top:67px;width:1px;height:19px;background:#808080"></div>
<div style="left:452px;top:67px;width:1px;height:19px;background:#fff"></div>
<svg style="left:461px;top:71px" width="13" height="13" viewBox="0 0 13 13">
<defs><radialGradient id="gr461" cx="0.4" cy="0.32" r="0.72"><stop offset="0" stop-color="#ffb0a8"/><stop offset="0.45" stop-color="#f04040"/><stop offset="0.85" stop-color="#d01818"/><stop offset="1" stop-color="#901010"/></radialGradient></defs>
<circle cx="6.500" cy="6.500" r="6.300" fill="url(#gr461)"/><path d="M3.800 3.800l5.400 5.400M9.200 3.800l-5.400 5.400" stroke="#fff" stroke-width="1.400"/></svg>
<div style="left:482px;top:67px;width:1px;height:19px;background:#808080"></div>
<div style="left:483px;top:67px;width:1px;height:19px;background:#fff"></div>
<svg style="left:489px;top:69px" width="18" height="16" viewBox="0 0 18 16"><path d="M1 8L8.600 1V4.500H17L15 11H8.600L7.400 15Z" fill="#000080"/><path d="M3.800 7.500L7.600 4V5.700H15.500V8.200H8.500V9.300H5.700Z" fill="#fff"/></svg>
<svg style="left:512px;top:69px" width="18" height="16" viewBox="0 0 18 16"><path d="M1.500 4.500H8.700V1L17 7.500L8.500 15V11H1L3 8Z" fill="#000080"/><path d="M3.300 5.900H9.500V8H2.800Z" fill="#fff"/><path d="M10 4L15.200 7.700L10 12.200Z" fill="#fff"/></svg>
<div style="left:536px;top:67px;width:1px;height:19px;background:#808080"></div>
<div style="left:537px;top:67px;width:1px;height:19px;background:#fff"></div>
<svg style="left:545px;top:68px" width="16" height="17" viewBox="0 0 16 17">
<path d="M5.700 6.200l1.300 3 3.200 0.300 -2.400 2.100 0.700 3.200 -2.800-1.700 -2.800 1.700 0.700-3.200 -2.400-2.100 3.200-0.300z" fill="#fff468" stroke="#806800" stroke-width="1"/>
<path d="M10.500 1.500h2.200v2h2v2.200h-2v2h-2.200v-2h-2v-2.200h2z" fill="#50e850" stroke="#18a018" stroke-width="0.900"/></svg>
<div style="left:589px;top:66px;width:1px;height:22px;background:#808080"></div>
<div style="left:590px;top:66px;width:1px;height:22px;background:#fff"></div>
<div style="left:593px;top:68px;width:1px;height:18px;background:#fff"></div>
<div style="left:594px;top:68px;width:1px;height:18px;background:#fff"></div>
<div style="left:595px;top:68px;width:1px;height:18px;background:#808080"></div>
<div style="left:593px;top:68px;width:2px;height:1px;background:#fff"></div>
<div style="left:593px;top:85px;width:3px;height:1px;background:#808080"></div>
<svg style="left:605px;top:68px" width="9" height="18" viewBox="0 0 9 18">
<path d="M3.500 2L5.500 9.500L3.800 12M8 2L5.500 9.500L7 11.500" stroke="#000" stroke-width="1.300" fill="none"/>
<circle cx="3" cy="14" r="1.800" fill="none" stroke="#0000a0" stroke-width="1.300"/><path d="M7 10.500v4.500h3" fill="none" stroke="#0000a0" stroke-width="1.300"/></svg>
<div style="left:347px;top:96px;width:39px;height:21px;background:#0A246A;box-sizing:border-box;border:1px solid;border-color:#808080 #fff #fff #808080"></div>
<div style="left:348px;top:97px;width:37px;height:19px;box-sizing:border-box;border:1px solid;border-color:#404040 #fff #fff #404040"></div>
<div class="ms" style="left:354.5px;top:99.7px;color:#fff">5.6.2.</div>
<div style="left:345px;top:121px;width:269px;height:365px;background:#808080"></div>
<div style="left:345px;top:121px;width:269px;height:362px;background:#D4D0C8"></div>
<div style="left:506px;top:141px;width:108px;height:342px;background:#fff"></div>
<div class="c" style="left:349px;top:123.7px;">Data Type</div>
<div class="c" style="left:509px;top:123.7px;">SMDR</div>
<div style="left:345px;top:140px;width:161px;height:1px;background:#808080"></div>
<div style="left:506px;top:140px;width:108px;height:1px;background:#dcdcdc"></div>
<div class="c" style="left:349px;top:142.7px;">Current Status</div>
<div class="cv" style="left:506px;top:142.7px;color:#808080;">Off</div>
<div style="left:345px;top:159px;width:161px;height:1px;background:#808080"></div>
<div style="left:506px;top:159px;width:108px;height:1px;background:#dcdcdc"></div>
<div class="c" style="left:349px;top:161.7px;">Buffered Data Printout</div>
<div class="cv" style="left:506px;top:161.7px;">No</div>
<div style="left:345px;top:178px;width:161px;height:1px;background:#808080"></div>
<div style="left:506px;top:178px;width:108px;height:1px;background:#dcdcdc"></div>
<div class="c" style="left:349px;top:180.7px;">Update to LAN Card</div>
<div class="cv" style="left:506px;top:180.7px;">Yes</div>
<div style="left:345px;top:197px;width:161px;height:1px;background:#808080"></div>
<div style="left:506px;top:197px;width:108px;height:1px;background:#dcdcdc"></div>
<div class="c" style="left:349px;top:199.7px;">Printer IP Address</div>
<div class="cv" style="left:506px;top:199.7px;transform:scaleX(.84);">192.168.1.1</div>
<div style="left:345px;top:216px;width:161px;height:1px;background:#808080"></div>
<div style="left:506px;top:216px;width:108px;height:1px;background:#dcdcdc"></div>
<div class="c" style="left:349px;top:218.7px;">Printer TCP Port</div>
<div class="cv" style="left:506px;top:218.7px;transform:scaleX(.84);">5100</div>
<div style="left:345px;top:235px;width:161px;height:1px;background:#808080"></div>
<div style="left:506px;top:235px;width:108px;height:1px;background:#dcdcdc"></div>
<div class="c" style="left:349px;top:237.7px;">LAN TCP Port</div>
<div class="cv" style="left:506px;top:237.7px;transform:scaleX(.84);">10020</div>
<div style="left:345px;top:254px;width:161px;height:1px;background:#808080"></div>
<div style="left:506px;top:254px;width:108px;height:1px;background:#dcdcdc"></div>
<div class="c" style="left:349px;top:256.7px;">Printer Destination</div>
<div class="cv" style="left:506px;top:256.7px;">PC</div>
<div style="left:345px;top:273px;width:161px;height:1px;background:#808080"></div>
<div style="left:506px;top:273px;width:108px;height:1px;background:#dcdcdc"></div>
<div class="c" style="left:349px;top:275.7px;">Retry Count</div>
<div class="cv" style="left:506px;top:275.7px;transform:scaleX(.84);">3</div>
<div style="left:345px;top:292px;width:161px;height:1px;background:#808080"></div>
<div style="left:506px;top:292px;width:108px;height:1px;background:#dcdcdc"></div>
<div class="c" style="left:349px;top:294.7px;">Retry Interval (sec)</div>
<div class="cv" style="left:506px;top:294.7px;transform:scaleX(.84);">10</div>
<div style="left:345px;top:311px;width:161px;height:1px;background:#808080"></div>
<div style="left:506px;top:311px;width:108px;height:1px;background:#dcdcdc"></div>
<div class="c" style="left:349px;top:313.7px;">PJL Enable</div>
<div class="cv" style="left:506px;top:313.7px;">False</div>
<div style="left:345px;top:330px;width:161px;height:1px;background:#808080"></div>
<div style="left:506px;top:330px;width:108px;height:1px;background:#dcdcdc"></div>
<div class="c" style="left:349px;top:332.7px;">Printer Language</div>
<div class="cv" style="left:506px;top:332.7px;">Raw</div>
<div style="left:345px;top:349px;width:161px;height:1px;background:#808080"></div>
<div style="left:506px;top:349px;width:108px;height:1px;background:#dcdcdc"></div>
<div class="c" style="left:349px;top:351.7px;">Paper Size</div>
<div class="cv" style="left:506px;top:351.7px;">Letter</div>
<div style="left:345px;top:368px;width:161px;height:1px;background:#808080"></div>
<div style="left:506px;top:368px;width:108px;height:1px;background:#dcdcdc"></div>
<div class="c" style="left:349px;top:370.7px;">Font Type</div>
<div class="cv" style="left:506px;top:370.7px;">Courier</div>
<div style="left:345px;top:387px;width:161px;height:1px;background:#808080"></div>
<div style="left:506px;top:387px;width:108px;height:1px;background:#dcdcdc"></div>
<div class="c" style="left:349px;top:389.7px;">Duplex Enable</div>
<div class="cv" style="left:506px;top:389.7px;">False</div>
<div style="left:345px;top:406px;width:161px;height:1px;background:#808080"></div>
<div style="left:506px;top:406px;width:108px;height:1px;background:#dcdcdc"></div>
<div class="c" style="left:349px;top:408.7px;">Orientation</div>
<div class="cv" style="left:506px;top:408.7px;">Portrait</div>
<div style="left:345px;top:425px;width:161px;height:1px;background:#808080"></div>
<div style="left:506px;top:425px;width:108px;height:1px;background:#dcdcdc"></div>
<div class="c" style="left:349px;top:427.7px;">Printer Tray</div>
<div class="cv" style="left:506px;top:427.7px;">Default</div>
<div style="left:345px;top:444px;width:161px;height:1px;background:#808080"></div>
<div style="left:506px;top:444px;width:108px;height:1px;background:#dcdcdc"></div>
<div class="c" style="left:349px;top:446.7px;">Resolution</div>
<div class="cv" style="left:506px;top:446.7px;transform:scaleX(.89);">300 DPI</div>
<div style="left:345px;top:463px;width:161px;height:1px;background:#808080"></div>
<div style="left:506px;top:463px;width:108px;height:1px;background:#dcdcdc"></div>
<div class="c" style="left:349px;top:465.7px;">Line per Page</div>
<div class="cv" style="left:506px;top:465.7px;transform:scaleX(.84);">1</div>
<div style="left:345px;top:121px;width:269px;height:1px;background:#000"></div>
<div style="left:345px;top:121px;width:1px;height:362px;background:#000"></div>
<div style="left:505px;top:121px;width:1px;height:362px;background:#808080"></div>
<div style="left:506px;top:140px;width:107px;height:1px;background:#808080"></div>
<div style="left:612px;top:141px;width:1px;height:342px;background:#dcdcdc"></div>
<div style="left:612px;top:122px;width:1px;height:19px;background:#808080"></div>
<div style="left:345px;top:482px;width:161px;height:1px;background:#808080"></div>
<div style="left:506px;top:482px;width:108px;height:1px;background:#dcdcdc"></div>
<div style="left:345px;top:483px;width:269px;height:1px;background:#000"></div>
<div style="left:614px;top:0px;width:3px;height:486px;background:#fff"></div>
</body></html>
